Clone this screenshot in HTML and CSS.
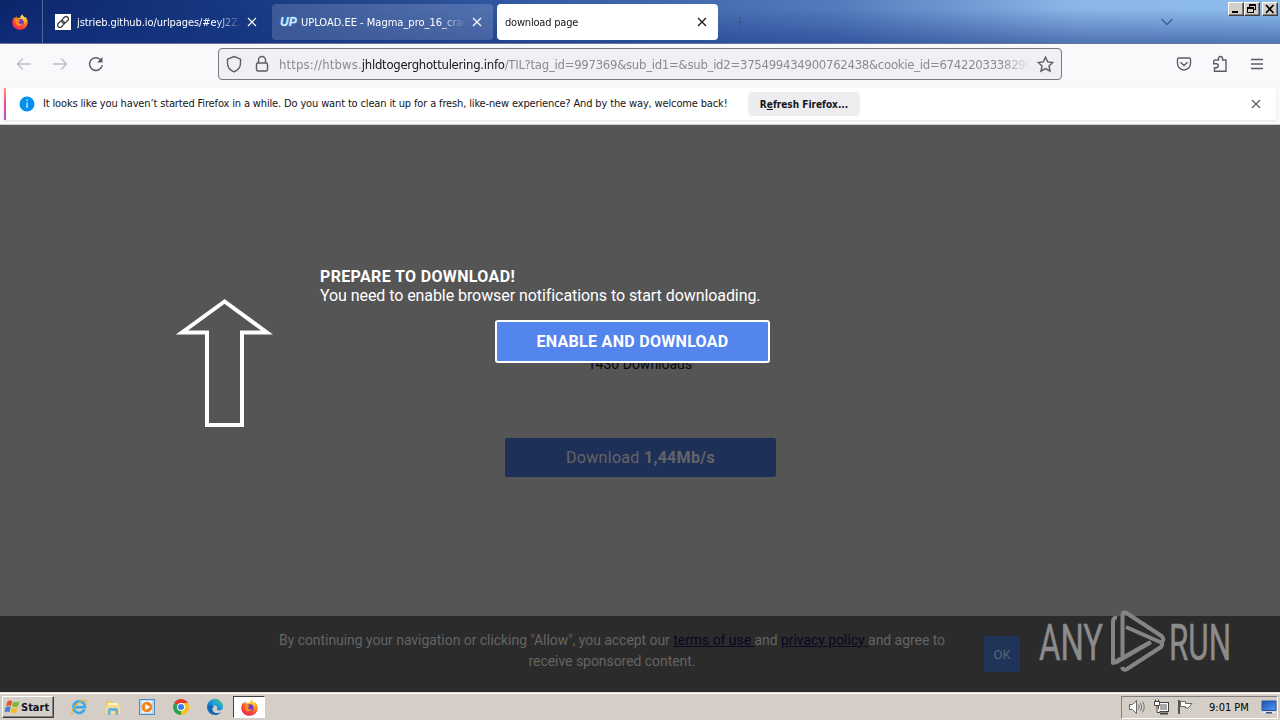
FILE: index.html
```html
<!DOCTYPE html>
<html lang="en">
<head>
    <meta charset="UTF-8">
    <meta name="viewport" content="width=device-width, initial-scale=1.0">
    <title>download page</title>
    <link rel="stylesheet" href="styles.css">
</head>
<body>
    <svg width="0" height="0" class="defs">
        <defs>
            <radialGradient id="fire" cx="0.7" cy="0.15" r="0.95">
                <stop offset="0" stop-color="#ffe14a"/>
                <stop offset="0.4" stop-color="#ff9a1e"/>
                <stop offset="0.75" stop-color="#ff4035"/>
                <stop offset="1" stop-color="#e3206b"/>
            </radialGradient>
            <linearGradient id="edgeblue" x1="0" y1="1" x2="1" y2="0">
                <stop offset="0" stop-color="#0c59a4"/>
                <stop offset="0.55" stop-color="#1b9de2"/>
                <stop offset="1" stop-color="#5fd35b"/>
            </linearGradient>
            <linearGradient id="screen" x1="0" y1="0" x2="1" y2="1">
                <stop offset="0" stop-color="#1c50b5"/>
                <stop offset="1" stop-color="#4f9af0"/>
            </linearGradient>
            <symbol id="firefox" viewBox="0 0 16 16">
                <path d="M8 15.8C3.600 15.800.3 12.500.3 8.400.3 6.300 1.100 4.400 2.200 3l.5 1.400L4.500 1.900l.4 2.300c1-.6 2.200-.7 3.200-.3C8.300 2.300 9.200.9 10.600.2c0 1.600 1.200 2.300 2.200 3.300l.5-.7c1.500 1.500 2.400 3.400 2.400 5.600 0 4.200-3.400 7.400-7.700 7.400z" fill="url(#fire)"/>
                <circle cx="8.300" cy="8.500" r="3.500" fill="#6a3bc4"/>
                <path d="M3.600 6.200c1.700-.9 3.300-.5 4.700.5L6.600 8c.2 1.900 2.600 2.500 4.300 1.200-.6 3-5.400 3.600-7 .7z" fill="#ff8a1d"/>
            </symbol>
            <symbol id="cross" viewBox="0 0 10 10">
                <path d="M1 1l8 8M9 1l-8 8" fill="none" stroke="currentColor" stroke-width="1.200"/>
            </symbol>
        </defs>
    </svg>

    <header class="tabstrip">
        <div class="pinned"><svg width="16" height="16"><use href="#firefox"/></svg></div>
        <div class="tab">
            <svg class="favicon" width="16" height="16" viewBox="0 0 16 16">
                <rect width="16" height="16" fill="#fff"/>
                <g fill="none" stroke="#333" stroke-width="1.200" transform="rotate(-45 8 8)">
                    <rect x="1.300" y="5.700" width="7.600" height="4.600" rx="2.300"/>
                    <rect x="7.100" y="5.700" width="7.600" height="4.600" rx="2.300"/>
                </g>
            </svg>
            <span class="tab-title t1">jstrieb.github.io/urlpages/#eyJ2ZX</span>
            <svg class="close" width="10" height="10"><use href="#cross"/></svg>
        </div>
        <div class="tab hovered">
            <span class="up">UP</span>
            <span class="tab-title t2">UPLOAD.EE - Magma_pro_16_crac</span>
            <svg class="close" width="10" height="10"><use href="#cross"/></svg>
        </div>
        <div class="tab active">
            <span class="tab-title t3">download page</span>
            <svg class="close" width="10" height="10"><use href="#cross"/></svg>
        </div>
        <svg class="newtab" width="12" height="12" viewBox="0 0 12 12"><path d="M6 1v10M1 6h10" stroke="currentColor" stroke-width="1.200"/></svg>
        <svg class="alltabs" width="14" height="10" viewBox="0 0 14 10"><path d="M1.500 2L7 7.500 12.500 2" fill="none" stroke="currentColor" stroke-width="1.500"/></svg>
        <div class="winbuttons">
            <button><svg width="14" height="12"><path d="M3 8h6v2H3z"/></svg></button>
            <button><svg width="14" height="12"><path d="M4 1h7v6H9V6h1V3H5v1H4zM2 4h7v6H2zm1 2v3h5V6z" fill-rule="evenodd"/></svg></button>
            <button class="win-close"><svg width="14" height="12"><path d="M3 2l7.500 8M10.500 2L3 10" stroke="#000" stroke-width="1.700"/></svg></button>
        </div>
    </header>

    <nav class="toolbar">
        <svg class="dim" width="16" height="16" viewBox="0 0 16 16"><path d="M15 8H1.500M7 2.500L1.500 8 7 13.500"/></svg>
        <svg class="dim forward" width="16" height="16" viewBox="0 0 16 16"><path d="M1 8h13.500M9 2.500L14.500 8 9 13.500"/></svg>
        <svg class="reload" width="16" height="16" viewBox="0 0 16 16"><path d="M14.300 9A6.400 6.400 0 1 1 12.900 4"/><path d="M14.500 1v5.500H9z" fill="#5b5b66" stroke="none"/></svg>
        <div class="urlbar">
            <svg width="16" height="18" viewBox="0 0 16 18"><path d="M8 1.500l6.500 2.700v4c0 4-2.800 7-6.500 8.600C4.300 15.200 1.500 12.200 1.500 8.200v-4z"/></svg>
            <svg class="lock" width="14" height="18" viewBox="0 0 14 18"><rect x="1.500" y="8" width="11" height="8" rx="1.500"/><path d="M3.500 8V5a3.500 3.500 0 0 1 7 0v3"/></svg>
            <span class="url"><span class="u1">https://htbws.</span><b>jhldtogerghottulering.info</b><span class="u2">/TIL?tag_id=997369&amp;sub_id1=&amp;sub_id2=375499434900762438&amp;cookie_id=6742203338290</span></span>
            <svg class="star" width="17" height="17" viewBox="0 0 17 17"><path d="M8.500 1.200l2.200 4.700 5.100.6-3.800 3.500 1 5.100-4.500-2.500-4.500 2.500 1-5.100L1.200 6.500l5.100-.6z"/></svg>
        </div>
        <svg class="pocket" width="16" height="16" viewBox="0 0 16 16"><path d="M2.700 2h10.600q1.200 0 1.200 1.200V7.500a6.500 6.500 0 0 1-13 0V3.200Q1.500 2 2.700 2zM4.500 6.200L8 9.500l3.500-3.300"/></svg>
        <svg class="puzzle" width="16" height="18" viewBox="0 0 16 18"><path d="M3 5h3.500V3.500a2 2 0 0 1 4 0V5H14v11.300H2.500v-3.500h1.800a2 2 0 0 0 0-4H1.700V7q0-2 1.300-2z"/></svg>
        <svg width="14" height="14" viewBox="0 0 14 14"><path d="M1 2.500h12M1 7h12M1 11.500h12"/></svg>
    </nav>

    <div class="notice-wrap">
        <div class="notice">
            <svg width="16" height="16" viewBox="0 0 16 16"><circle cx="8" cy="8" r="7.500" fill="#0390ee"/><path d="M7.300 3.500h1.500V5H7.300zM7.300 6.500h1.500V12H7.300z" fill="#bfe6ff"/></svg>
            <span class="notice-text">It looks like you haven’t started Firefox in a while. Do you want to clean it up for a fresh, like-new experience? And by the way, welcome back!</span>
            <button class="refresh">R<u>e</u>fresh Firefox...</button>
            <svg class="notice-close" width="10" height="10"><use href="#cross"/></svg>
        </div>
    </div>

    <main class="page">
        <div class="content">
            <p class="count">1430 Downloads</p>
            <a class="download">Download <b>1,44Mb/s</b></a>
        </div>
        <footer class="consent">
            <p>By continuing your navigation or clicking "Allow", you accept our <a>terms of use </a>and <a>privacy policy </a>and agree to receive sponsored content.</p>
            <button class="ok">OK</button>
        </footer>

        <div class="overlay">
            <svg class="arrow" width="98" height="132" viewBox="0 0 98 132"><path d="M49.500 4.500L7 35.500h25V128h35V35.500h25z" fill="none" stroke="#fff" stroke-width="4"/></svg>
            <div class="prompt">
                <strong>PREPARE TO DOWNLOAD!</strong>
                <span>You need to enable browser notifications to start downloading.</span>
                <button class="enable">ENABLE AND DOWNLOAD</button>
            </div>
        </div>

        <svg class="watermark" width="196" height="64" viewBox="0 0 196 64">
            <g font-family="Roboto" font-size="50" fill="#8b8b8b" stroke="#8b8b8b" stroke-width="0.500">
                <text x="3" y="50" textLength="64" lengthAdjust="spacingAndGlyphs">ANY</text>
                <text x="133" y="50" textLength="62" lengthAdjust="spacingAndGlyphs">RUN</text>
            </g>
            <g fill="none" stroke="#858585" stroke-width="4" stroke-linejoin="round">
                <path d="M81 8q-4-1-4 4v41l36-20"/>
                <path d="M86.500 46V5q0-4 4-2l35 23q4 4-1 7"/>
                <path d="M90 17l34 15q4 2 1 5L91 59q-4 2-5-2"/>
                <path d="M79 53l36-21"/>
            </g>
        </svg>
    </main>

    <div class="taskbar">
        <div class="start">
            <svg width="17" height="16" viewBox="0 0 17 16">
                <path d="M3.500 2.500Q6 .8 8.300 2.200L7 7Q5 6 2 7.300z" fill="#e9552b"/>
                <path d="M9.300 2.700Q12 4 15.500 2.300L14 7.200Q11 8.800 8 7.300z" fill="#7ab82e"/>
                <path d="M1.700 8.300Q4.500 7 6.700 8.100L5.400 13Q3 12 .5 13.300z" fill="#3d7fd4"/>
                <path d="M7.700 8.500Q10.500 10 13.700 8.200L12.300 13.200Q9.500 14.700 6.400 13.300z" fill="#f6bd20"/>
            </svg>
            <b>Start</b>
        </div>
        <div class="quick">
            <svg width="18" height="18" viewBox="0 0 18 18">
                <path d="M14.500 11.500a5.800 5.800 0 1 1 .5-2.300H5" fill="none" stroke="#38a9e8" stroke-width="2.600"/>
                <path d="M2.500 16.500C-1 14 8 3 14.500 2q3-.2 1.500 3" fill="none" stroke="#ecb42c" stroke-width="1.200"/>
            </svg>
            <svg width="18" height="18" viewBox="0 0 18 18">
                <path d="M2 3h5l1 2h7v10H2z" fill="#edc868"/>
                <path d="M4 5h10v4H4z" fill="#fff5c8"/>
                <path d="M2 7h14v9H2z" fill="#f5dc8c"/>
                <path d="M4 17v-5q0-2 2-2h6q2 0 2 2v5h-2.500v-4h-5v4z" fill="#64b2df"/>
            </svg>
            <svg width="18" height="18" viewBox="0 0 18 18">
                <rect x="1.500" y="1.500" width="15" height="15" fill="#b9d9f3" stroke="#4c8bc4"/>
                <rect x="4" y="3" width="10" height="12" fill="#e9f4fc"/>
                <circle cx="9" cy="9" r="5.300" fill="#f28420"/>
                <path d="M7.300 6l5 3-5 3z" fill="#fff"/>
            </svg>
            <svg width="18" height="18" viewBox="0 0 18 18">
                <path d="M9 9L2.100 5a8 8 0 0 1 13.800 0z" fill="#e33b2e"/>
                <path d="M9 9l6.900-4A8 8 0 0 1 9 17z" fill="#fbc116"/>
                <path d="M9 9v8A8 8 0 0 1 2.100 5z" fill="#2da14c"/>
                <path d="M9 5h6.900a8 8 0 0 1 0 8L9 17l3.500-6z" fill="#fbc116"/>
                <circle cx="9" cy="9" r="4" fill="#fff"/>
                <circle cx="9" cy="9" r="3" fill="#3b7ded"/>
            </svg>
            <svg width="18" height="18" viewBox="0 0 18 18">
                <path d="M1 9a8 8 0 0 1 16-.5c.2 3-2.400 4.300-5 3.800-1.800-.4-1-1.300-.8-2.500C11.200 6.500 5 6 1 9z" fill="url(#edgeblue)"/>
                <path d="M1 9c3-3 6-2 7-.6-3 1.600-1.500 6.600 3 6.600 2 0 3.300-.6 4.300-1.300C13.700 16.300 11.200 17 9 17a8 8 0 0 1-8-8z" fill="#0f68b8"/>
            </svg>
            <div class="running"><svg width="17" height="17"><use href="#firefox"/></svg></div>
        </div>
        <div class="tray">
            <svg width="18" height="16" viewBox="0 0 18 16"><path d="M1.500 5.500h3l4-4v13l-4-4h-3z" fill="#fff" stroke="#666"/><path d="M10.500 5.500q1.500 2.500 0 5M12.500 4q2.500 4 0 8M14.500 2.500q3.500 5.500 0 11" fill="none" stroke="#777"/></svg>
            <svg width="17" height="16" viewBox="0 0 17 16"><rect x="5.500" y="3.500" width="10" height="9" fill="#a9a9a9" stroke="#444"/><path d="M6.500 4.500h8v7h-8z" fill="none" stroke="#fff"/><path d="M7 14.500h8" stroke="#444" stroke-width="2"/><path d="M1.500 2.500h5v4h-5zM2.500.5v2M5.500.5v2M4 6.500v7h3" fill="#fff" stroke="#444"/></svg>
            <svg width="17" height="16" viewBox="0 0 17 16"><path d="M2 1v14" stroke="#555" stroke-width="2"/><path d="M3.500 2.500h5v2h6.500l-2 2.500-2 2H8.500v-1.500h-5z" fill="#fff" stroke="#666"/></svg>
            <span class="clock">9:01 PM</span>
            <svg width="16" height="14" viewBox="0 0 16 14"><path d="M1 1h14v9.500H1z" fill="url(#screen)" stroke="#24549c"/><path d="M1 11.500h14v1.500H1z" fill="#d7e7f8"/><path d="M5 12h6v1.500H5z" fill="#315688"/></svg>
        </div>
    </div>
</body>
</html>
```
FILE: styles.css
```css
* {
    box-sizing: border-box;
}
body {
    margin: 0;
    width: 1280px;
    height: 720px;
    overflow: hidden;
    display: flex;
    flex-direction: column;
    font-family: "DejaVu Sans Condensed", "DejaVu Sans", sans-serif;
    font-stretch: condensed;
    font-size: 11px;
    color: #15141a;
}
svg {
    flex: none;
    display: block;
}
.defs {
    position: absolute;
}
button {
    font: inherit;
    padding: 0;
    border: none;
}
p {
    margin: 0;
}

/* tabs */
.tabstrip {
    height: 44px;
    flex: none;
    display: flex;
    align-items: flex-start;
    border-bottom: 1px solid #6a7591;
    background: linear-gradient(to bottom, rgba(20, 50, 130, 0) 20%, rgba(20, 50, 130, 0.5)), linear-gradient(to right, #0c266c, #173a82 20%, #3258a1 40%, #527abc 65%, #8bb6e7 84%, #8dbdec);
}
.pinned {
    width: 43px;
    height: 43px;
    padding: 14px 0 0 12px;
    border-right: 1px solid #536895;
}
.tab {
    display: flex;
    align-items: center;
    height: 36px;
    margin-top: 4px;
    padding-left: 12px;
    width: 225px;
    color: #fff;
    border-radius: 4px;
}
.tab.hovered {
    width: 221px;
    margin-left: 4px;
    padding-left: 8px;
    background: rgba(255, 255, 255, 0.16);
}
.tab.active {
    width: 221px;
    margin-left: 4px;
    padding-left: 8px;
    background: #fff;
    color: #15141a;
}
.tab-title {
    margin-left: 6px;
    padding-top: 2px;
    width: 164px;
    white-space: nowrap;
    overflow: hidden;
    line-height: 16px;
    -webkit-mask-image: linear-gradient(to left, transparent, #000 26px);
    mask-image: linear-gradient(to left, transparent, #000 26px);
}
.tab-title.t1 {
    letter-spacing: -0.08px;
}
.tab-title.t2 {
    margin-left: 4px;
    width: 165px;
}
.tab-title.t3 {
    margin-left: 0;
    width: 184px;
    letter-spacing: -0.2px;
}
.close {
    margin-left: 6px;
}
.active .close {
    margin-left: 8px;
}
.up {
    width: 17px;
    color: #d4eaff;
    font: italic bold 12px "Liberation Sans", sans-serif;
    text-shadow: 0 0 2px #3da2ff;
}
.newtab {
    margin: 16px 0 0 16px;
    color: #3f5688;
}
.alltabs {
    margin: 17px 0 0 auto;
    color: #48638f;
}
.winbuttons {
    display: flex;
    margin: 2px 2px 0 54px;
}
.winbuttons button,
.start {
    background: #d4d0c8;
    border: 1px solid;
    border-color: #fff #404040 #404040 #fff;
    box-shadow: inset -1px -1px #808080;
}
.winbuttons button {
    width: 16px;
    height: 14px;
}
.winbuttons .win-close {
    margin-left: 2px;
}

/* navigation */
.toolbar {
    height: 44px;
    flex: none;
    display: flex;
    align-items: center;
    padding: 0 17px 4px 16px;
    background: #f9f9fb;
}
.toolbar svg {
    fill: none;
    stroke: #5b5b66;
    stroke-width: 1.4;
}
.toolbar .dim {
    stroke: #bdbdc3;
}
.forward {
    margin-left: 20px;
}
.reload {
    margin-left: 20px;
}
.urlbar {
    display: flex;
    align-items: center;
    width: 844px;
    height: 32px;
    margin-left: 114px;
    padding: 0 7px;
    background: #f0f0f4;
    border: 1px solid #77777d;
    border-radius: 4px;
}
.lock {
    margin-left: 13px;
}
.url {
    margin-left: 10px;
    width: 752px;
    color: #8a8a90;
    font-size: 13px;
    white-space: nowrap;
    overflow: hidden;
    -webkit-mask-image: linear-gradient(to left, transparent, #000 30px);
    mask-image: linear-gradient(to left, transparent, #000 30px);
}
.url b {
    font-weight: normal;
    color: #15141a;
    letter-spacing: -0.27px;
}
.u1 {
    letter-spacing: 0.15px;
}
.u2 {
    letter-spacing: -0.27px;
}
.star {
    margin-left: 6px;
}
.pocket {
    margin-left: 114px;
}
.puzzle {
    margin: 0 22px 0 20px;
}
.notice-wrap {
    height: 37px;
    flex: none;
    padding: 0 4px;
    background: #f9f9fb;
    border-bottom: 1px solid #cfcfd4;
}
.notice {
    height: 32px;
    display: flex;
    align-items: center;
    padding-left: 13px;
    background: #fff;
    border-left: 2px solid;
    border-image: linear-gradient(#ff9a70, #ee4b94, #a05ad5) 1;
    box-shadow: 0 1px 2px rgba(0, 0, 0, 0.1);
}
.notice-text {
    width: 685px;
    margin-left: 8px;
    padding-bottom: 1px;
    letter-spacing: -0.145px;
    white-space: nowrap;
}
.refresh {
    width: 112px;
    height: 24px;
    margin-left: 20px;
    border-radius: 4px;
    background: #ededef;
    color: #15141a;
    font-weight: bold;
    font-size: 10px;
}
.notice-close {
    margin: 0 15px 0 auto;
    color: #5b5b66;
}

/* web page */
.page {
    position: relative;
    height: 567px;
    flex: none;
    display: flex;
    flex-direction: column;
    background: #555;
    font-family: Roboto, sans-serif;
    font-stretch: normal;
}
.content {
    flex: 1;
    display: flex;
    flex-direction: column;
    align-items: center;
    padding-top: 229px;
}
.count {
    font-size: 14px;
    line-height: 20px;
    color: #080808;
}
.download {
    width: 271px;
    height: 39px;
    margin: 64px 0 0 1px;
    border-radius: 2px;
    background: #1f3058;
    color: #626466;
    font-size: 16px;
    line-height: 39px;
    letter-spacing: 0.3px;
    text-align: center;
}
.consent {
    height: 76px;
    display: flex;
    align-items: center;
    padding-left: 262px;
    background: #2b2b2b;
    color: #646464;
}
.consent p {
    width: 700px;
    padding: 0 12px;
    font-size: 14px;
    line-height: 21px;
    letter-spacing: -0.05px;
    text-align: center;
    margin-top: -7px;
}
.consent a {
    color: #080725;
    text-decoration: underline;
}
.ok {
    width: 36px;
    height: 36px;
    margin-left: 22px;
    background: #203358;
    color: #596475;
    font-size: 13px;
}
.overlay {
    position: absolute;
    top: 0;
    left: 0;
    display: flex;
    padding: 142px 0 0 175px;
    color: #fff;
    font-size: 16px;
}
.arrow {
    margin-top: 30px;
}
.prompt {
    display: flex;
    flex-direction: column;
    margin-left: 47px;
    line-height: 19px;
}
.prompt strong {
    font-weight: 700;
    letter-spacing: 0.35px;
}
.prompt span {
    letter-spacing: -0.07px;
}
.enable {
    width: 275px;
    height: 43px;
    margin: 15px 0 0 175px;
    border: 2px solid #fff;
    border-radius: 3px;
    background: #5485ed;
    color: #fff;
    font-weight: 700;
    letter-spacing: 0.3px;
}
.watermark {
    position: absolute;
    left: 1036px;
    top: 485px;
}

/* windows taskbar */
.taskbar {
    flex: 1;
    display: flex;
    align-items: center;
    padding: 1px 2px 0;
    background: #d5cec6;
    border-top: 1px solid #e2ded8;
    box-shadow: inset 0 1px #fff;
}
.start {
    display: flex;
    align-items: center;
    width: 52px;
    height: 22px;
    padding-left: 1px;
    font-size: 11px;
}
.quick {
    display: flex;
    align-items: center;
    gap: 16px;
    margin-left: 16px;
}
.running {
    width: 32px;
    height: 22px;
    margin-left: -7px;
    padding: 2px 0 0 7px;
    background: #fff;
    border: 1px solid;
    border-color: #404040 #fff #fff #404040;
}
.tray {
    display: flex;
    align-items: center;
    gap: 7px;
    width: 157px;
    height: 23px;
    margin-left: auto;
    padding-left: 6px;
    border: 1px solid;
    border-color: #808080 #fff #fff #808080;
}
.clock {
    width: 43px;
    margin: 0 2px 0 8px;
    color: #000;
    white-space: nowrap;
}
```
